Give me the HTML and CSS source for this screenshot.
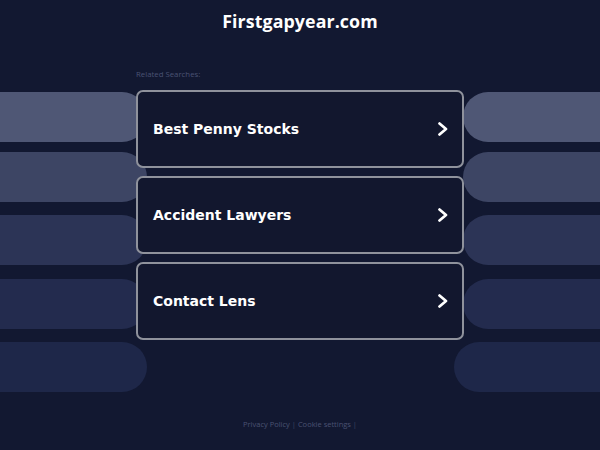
FILE: index.html
```html
<!DOCTYPE html>
<html lang="en">
<head>
<meta charset="utf-8">
<title>Firstgapyear.com</title>
<link rel="stylesheet" href="styles.css">
</head>
<body>
<header class="header">
  <h1 class="domain">Firstgapyear.com</h1>
</header>
<main class="stage">
  <div class="side side-left">
    <div class="bar b1"></div>
    <div class="bar b2"></div>
    <div class="bar b3"></div>
    <div class="bar b4"></div>
    <div class="bar b5"></div>
  </div>
  <section class="center">
    <p class="related">Related Searches:</p>
    <div class="cards">
      <a class="card" href="#"><span class="card-text">Best Penny Stocks</span><svg class="chev" viewBox="0 0 12 14" width="12" height="14"><path d="M2.5 1.5 L9 7 L2.5 12.5" fill="none" stroke="#fff" stroke-width="2.7" stroke-linecap="round" stroke-linejoin="round"/></svg></a>
      <a class="card" href="#"><span class="card-text">Accident Lawyers</span><svg class="chev" viewBox="0 0 12 14" width="12" height="14"><path d="M2.5 1.5 L9 7 L2.5 12.5" fill="none" stroke="#fff" stroke-width="2.7" stroke-linecap="round" stroke-linejoin="round"/></svg></a>
      <a class="card" href="#"><span class="card-text">Contact Lens</span><svg class="chev" viewBox="0 0 12 14" width="12" height="14"><path d="M2.5 1.5 L9 7 L2.5 12.5" fill="none" stroke="#fff" stroke-width="2.7" stroke-linecap="round" stroke-linejoin="round"/></svg></a>
    </div>
  </section>
  <div class="side side-right">
    <div class="bar b1"></div>
    <div class="bar b2"></div>
    <div class="bar b3"></div>
    <div class="bar b4"></div>
    <div class="bar b5"></div>
  </div>
</main>
<footer class="footer">
  <a href="#">Privacy Policy</a> | <a href="#">Cookie settings</a> |
</footer>
</body>
</html>
```
FILE: styles.css
```css
html, body {
  margin: 0;
  padding: 0;
}
body {
  background: #121831;
  width: 600px;
  height: 450px;
  overflow: hidden;
  font-family: "Open Sans", "Liberation Sans", sans-serif;
}
.header {
  height: 41px;
  display: flex;
  justify-content: center;
  align-items: center;
}
.domain {
  margin: 0;
  color: #ffffff;
  font-family: "Open Sans", sans-serif;
  font-weight: 700;
  font-size: 17.8px;
  letter-spacing: 0.1px;
}
.stage {
  display: flex;
  align-items: flex-start;
  height: 357px;
}
.side {
  display: flex;
  flex-direction: column;
  padding-top: 51px;
}
.side-left {
  width: 147px;
  margin-right: -11px;
}
.side-right {
  width: 146px;
  margin-left: -10px;
  align-items: flex-end;
}
.bar {
  height: 50px;
  margin-bottom: 13px;
}
.b1 { background: #4f5775; margin-bottom: 10px; }
.b2 { background: #3d4564; }
.b3 { background: #2c3456; margin-bottom: 14px; }
.b4 { background: #232b4e; }
.b5 { background: #1e2749; }
.side-left .bar {
  border-radius: 0 25px 25px 0;
}
.side-right .bar {
  border-radius: 25px 0 0 25px;
  width: 137px;
}
.side-right .b5 {
  width: 146px;
}
.center {
  width: 328px;
  position: relative;
  z-index: 1;
}
.related {
  margin: 27px 0 0 0;
  height: 22px;
  font-size: 7.8px;
  color: #4a5273;
  line-height: 12px;
}
.cards {
  display: flex;
  flex-direction: column;
  gap: 8.5px;
}
.card {
  box-sizing: border-box;
  height: 77.5px;
  border: 2px solid #8f929c;
  border-radius: 7px;
  background: #12172e;
  display: flex;
  align-items: center;
  justify-content: space-between;
  padding: 0 13px 0 15px;
  text-decoration: none;
}
.card-text {
  color: #ffffff;
  font-family: "DejaVu Sans", sans-serif;
  font-weight: 700;
  font-size: 14px;
}
.chev {
  display: block;
}
.footer {
  text-align: center;
  font-size: 7.5px;
  color: #3c4566;
  padding-top: 21px;
}
.footer a {
  color: #4a5272;
  text-decoration: none;
}
```
